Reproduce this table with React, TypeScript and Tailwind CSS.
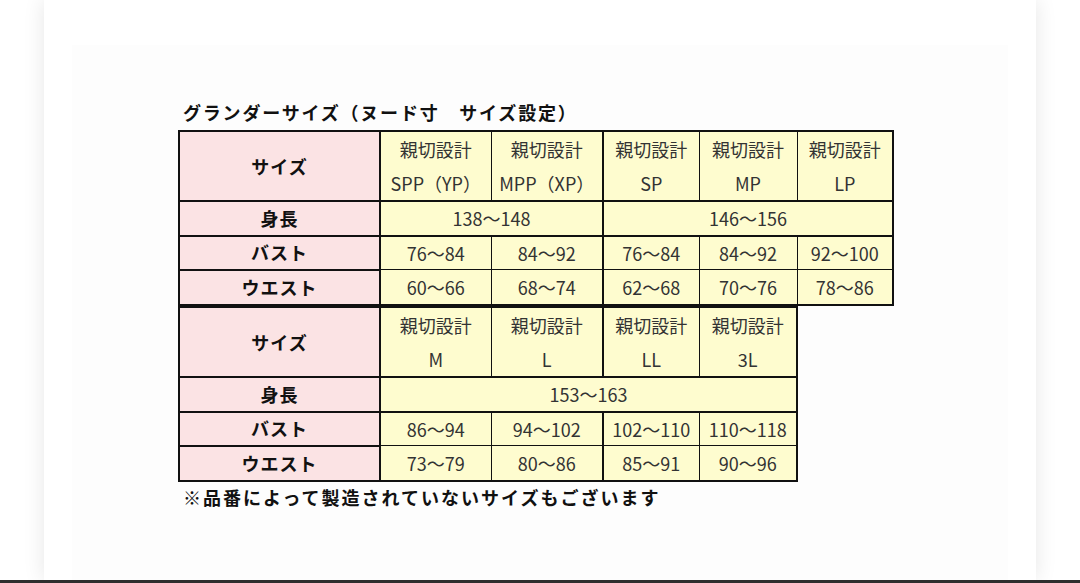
import React from "react";

const font = { fontFamily: '"Noto Sans CJK JP", "Noto Sans", sans-serif' };

const pink = "bg-[#fbe3e4]";
const yellow = "bg-[#fefccf]";

type Cell = { text: React.ReactNode; span?: number; thickLeft?: boolean };

const HeadCell = ({ label, thickLeft }: { label: string; thickLeft?: boolean }) => (
    <td
        className={`${yellow} border-y-2 border-r border-[#111] ${thickLeft ? "border-l-2" : "border-l"} text-center text-[18px] leading-[34px] text-[#333] whitespace-nowrap p-0`}
    >
        <div>親切設計</div>
        <div>{label}</div>
    </td>
);

const LabelCell = ({ children, tall }: { children: React.ReactNode; tall?: boolean }) => (
    <td
        className={`${pink} border-2 border-[#111] text-center font-bold text-[18px] tracking-[1px] text-[#111] p-0 ${tall ? "h-[70px]" : "h-[33px]"}`}
    >
        {children}
    </td>
);

const DataRow = ({ label, cells, thinTop, lh }: { label: string; cells: Cell[]; thinTop?: boolean; lh: string }) => (
    <tr>
        <LabelCell>{label}</LabelCell>
        {cells.map((c, i) => (
            <td
                key={i}
                colSpan={c.span ?? 1}
                className={`${yellow} ${thinTop ? "border-t" : "border-t-2"} border-b border-r border-[#111] ${c.thickLeft ? "border-l-2" : "border-l"} text-center text-[18px] ${lh} text-[#333] whitespace-nowrap p-0`}
            >
                {c.text}
            </td>
        ))}
    </tr>
);

const SizeTable = ({
    heads,
    widths,
    height,
    bust,
    waist,
    thickAt,
    className,
}: {
    heads: string[];
    widths: number[];
    height: Cell[];
    bust: string[];
    waist: string[];
    thickAt: number;
    className?: string;
}) => (
    <table
        className={`border-collapse table-fixed border-2 border-[#111] ${className ?? ""}`}
        style={{ width: widths.reduce((a, b) => a + b, 0) }}
    >
        <colgroup>
            {widths.map((w, i) => (
                <col key={i} style={{ width: w }} />
            ))}
        </colgroup>
        <tbody>
            <tr>
                <LabelCell tall>サイズ</LabelCell>
                {heads.map((h, i) => (
                    <HeadCell key={h} label={h} thickLeft={i === 0 || i === thickAt} />
                ))}
            </tr>
            <DataRow label="身長" cells={height} lh="leading-[33px]" />
            <DataRow
                label="バスト"
                lh="leading-[32px]"
                cells={bust.map((b, i) => ({ text: b, thickLeft: i === 0 || i === thickAt }))}
            />
            <tr>
                <LabelCell>ウエスト</LabelCell>
                {waist.map((w, i) => (
                    <td
                        key={i}
                        className={`${yellow} border-t border-b-2 border-r border-[#111] ${i === 0 || i === thickAt ? "border-l-2" : "border-l"} text-center text-[18px] leading-[34px] text-[#333] whitespace-nowrap p-0`}
                    >
                        {w}
                    </td>
                ))}
            </tr>
        </tbody>
    </table>
);

export default function App() {
    return (
        <div className="w-[1080px] h-[583px] bg-white flex flex-col overflow-hidden" style={font}>
            <div className="flex-1 flex justify-center min-h-0">
                <div className="w-[992px] h-full bg-white shadow-[0_0_20px_rgba(0,0,0,0.1)] pt-[45px] px-[28px]">
                    <div className="h-full bg-[#fdfdfd] pl-[106px] pt-[56px]">
                        {/* タイトル */}
                        <div className="text-[18px] leading-[22px] font-bold tracking-[1.8px] text-[#111] pl-[5px]">
                            グランダーサイズ（ヌード寸　サイズ設定）
                        </div>

                        {/* 上段：SPP〜LP */}
                        <SizeTable
                            className="mt-[7px]"
                            heads={["SPP（YP）", "MPP（XP）", "SP", "MP", "LP"]}
                            widths={[201, 111, 112, 96, 98, 96]}
                            thickAt={2}
                            height={[
                                { text: "138～148", span: 2, thickLeft: true },
                                { text: "146～156", span: 3, thickLeft: true },
                            ]}
                            bust={["76～84", "84～92", "76～84", "84～92", "92～100"]}
                            waist={["60～66", "68～74", "62～68", "70～76", "78～86"]}
                        />

                        {/* 下段：M〜3L */}
                        <SizeTable
                            className="border-t-0"
                            heads={["M", "L", "LL", "3L"]}
                            widths={[201, 111, 112, 96, 98]}
                            thickAt={2}
                            height={[{ text: "153～163", span: 4, thickLeft: true }]}
                            bust={["86～94", "94～102", "102～110", "110～118"]}
                            waist={["73～79", "80～86", "85～91", "90～96"]}
                        />

                        <div className="mt-[2px] text-[18px] leading-[26px] font-bold tracking-[2px] text-[#111] pl-[5px]">
                            ※品番によって製造されていないサイズもございます
                        </div>
                    </div>
                </div>
            </div>
            <div className="h-[3px] bg-[#2e2e2e]" />
        </div>
    );
}
